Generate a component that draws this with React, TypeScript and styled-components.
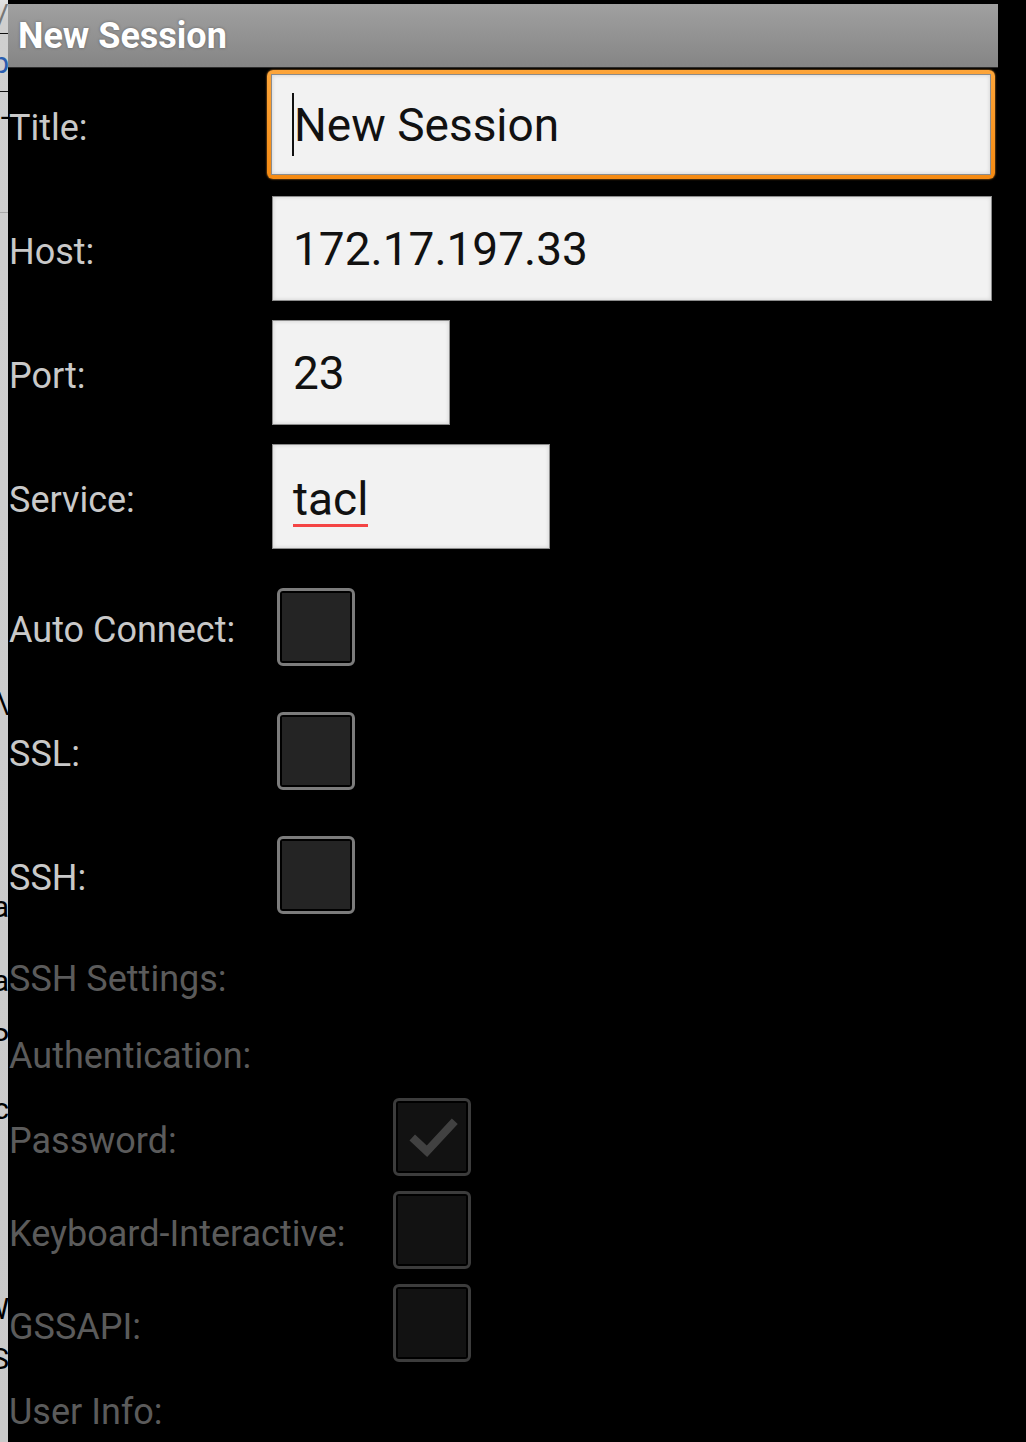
import React from "react";
import styled, { createGlobalStyle } from "styled-components";

const GlobalStyle = createGlobalStyle`
  html, body {
    margin: 0;
    padding: 0;
    background: #000;
  }
  body {
    font-family: Roboto, "Noto Sans", sans-serif;
  }
`;

const App: React.FC = () => {
  return (
    <Root>
      <GlobalStyle />
      <BackPage>
        <Rule $top={33} />
        <Rule $top={91} />
        <Rule $top={212} $light />
        <Peek $top={0} $color="#777">/</Peek>
        <Peek $top={48} $color="#2a5db0">p</Peek>
        <Peek $top={102}>-</Peek>
        <Peek $top={688}>\</Peek>
        <Peek $top={892}>a</Peek>
        <Peek $top={966}>a</Peek>
        <Peek $top={1024}>P</Peek>
        <Peek $top={1094}>c</Peek>
        <Peek $top={1294}>W</Peek>
        <Peek $top={1344}>S</Peek>
      </BackPage>
      <Dialog>
        <TitleBar>New Session</TitleBar>
        <Form>
          <FocusRow>
            <Label>Title:</Label>
            <FocusRing>
              <Field $width={720} $height={101}>
                <Caret />
                New Session
              </Field>
            </FocusRing>
          </FocusRow>
          <TextRow>
            <Label>Host:</Label>
            <Field $width={720}>172.17.197.33</Field>
          </TextRow>
          <TextRow>
            <Label>Port:</Label>
            <Field $width={178}>23</Field>
          </TextRow>
          <TextRow>
            <Label>Service:</Label>
            <Field $width={278}>
              <Misspelled>tacl</Misspelled>
            </Field>
          </TextRow>
          <CheckGroup>
            <Row $height={124}>
              <Label>Auto Connect:</Label>
              <CheckBox />
            </Row>
            <Row $height={124}>
              <Label>SSL:</Label>
              <CheckBox />
            </Row>
            <Row $height={124}>
              <Label>SSH:</Label>
              <CheckBox />
            </Row>
          </CheckGroup>
          <Row $height={77}>
            <Label $dim>SSH Settings:</Label>
          </Row>
          <Row $height={77}>
            <Label $dim>Authentication:</Label>
          </Row>
          <Row $height={93} $wide>
            <Label $dim>Password:</Label>
            <CheckBox $dim>
              <CheckMark viewBox="0 0 77 77">
                <polyline points="19,39 33.5,52.5 61,23" />
              </CheckMark>
            </CheckBox>
          </Row>
          <Row $height={93} $wide>
            <Label $dim>Keyboard-Interactive:</Label>
            <CheckBox $dim />
          </Row>
          <Row $height={93} $wide>
            <Label $dim>GSSAPI:</Label>
            <CheckBox $dim />
          </Row>
          <Row $height={77}>
            <Label $dim>User Info:</Label>
          </Row>
        </Form>
      </Dialog>
    </Root>
  );
};

export default App;

const Root = styled.div`
  width: 1026px;
  height: 1442px;
  display: flex;
  overflow: hidden;
  background: #000;
`;
const BackPage = styled.div`
  position: relative;
  width: 8px;
  flex-shrink: 0;
  overflow: hidden;
  background: linear-gradient(#e2e2e2 0, #cfcfcf 20px, #c9c9c9 100%);
`;
const Rule = styled.div<{ $top: number; $light?: boolean }>`
  position: absolute;
  left: 0;
  right: 0;
  top: ${({ $top }) => $top}px;
  height: 1px;
  background: ${({ $light }) => ($light ? "#a8a8a8" : "#111")};
`;
const Peek = styled.div<{ $top: number; $color?: string }>`
  position: absolute;
  right: -1px;
  top: ${({ $top }) => $top}px;
  font-family: Roboto, sans-serif;
  font-size: 30px;
  line-height: 30px;
  color: ${({ $color }) => $color || "#000"};
`;
const Dialog = styled.div`
  flex: 1;
  display: flex;
  flex-direction: column;
  padding-top: 4px;
  background: #000;
`;
const TitleBar = styled.div`
  flex-shrink: 0;
  width: 980px;
  height: 63px;
  padding-left: 10px;
  display: flex;
  align-items: center;
  background: linear-gradient(#a0a0a0, #858585);
  border-bottom: 1px solid #2c2c2c;
  font-family: Roboto, sans-serif;
  font-weight: 700;
  font-size: 36px;
  color: #fff;
  text-shadow: 0 0 3px rgba(0, 0, 0, 0.35);
`;
const Form = styled.div`
  flex-shrink: 0;
  width: 990px;
  display: flex;
  flex-direction: column;
`;
const Row = styled.div<{ $height: number; $wide?: boolean }>`
  flex-shrink: 0;
  display: grid;
  grid-template-columns: ${({ $wide }) => ($wide ? "385px" : "269px")} 1fr;
  align-items: center;
  height: ${({ $height }) => $height}px;
`;
const TextRow = styled.div`
  flex-shrink: 0;
  display: grid;
  grid-template-columns: 264px 1fr;
  align-items: center;
  padding: 9.5px 0;
`;
const FocusRow = styled(TextRow)`
  grid-template-columns: 259px 1fr;
  padding: 2px 0 7.5px;
`;
const CheckGroup = styled.div`
  flex-shrink: 0;
  display: flex;
  flex-direction: column;
  margin-top: 6px;
`;
const Label = styled.div<{ $dim?: boolean }>`
  padding: 7px 0 0 1px;
  font-family: Roboto, sans-serif;
  font-size: 36px;
  line-height: 36px;
  color: ${({ $dim }) => ($dim ? "#5b5b5b" : "#c9c9c9")};
  white-space: nowrap;
`;
const FocusRing = styled.div`
  width: 720px;
  padding: 4px;
  border-radius: 6px;
  background: linear-gradient(#fda53a, #f58a12);
  box-shadow: 0 0 2px #f59a30;
`;
const Field = styled.div<{ $width: number; $height?: number }>`
  box-sizing: border-box;
  width: ${({ $width }) => $width}px;
  height: ${({ $height }) => $height || 105}px;
  padding-left: 20px;
  display: flex;
  align-items: center;
  background: #f2f2f2;
  border: 1px solid #8c8c8c;
  box-shadow: inset 0 0 4px rgba(0, 0, 0, 0.14);
  font-family: Roboto, sans-serif;
  font-size: 46px;
  color: #111;
  white-space: nowrap;
`;
const Caret = styled.span`
  display: inline-block;
  width: 2px;
  height: 63px;
  background: #111;
`;
const Misspelled = styled.span`
  display: inline-block;
  line-height: 46px;
  border-bottom: 3px solid #f44444;
  padding-bottom: 2px;
  margin-top: 10px;
`;
const CheckBox = styled.div<{ $dim?: boolean }>`
  box-sizing: border-box;
  position: relative;
  width: 78px;
  height: 78px;
  border-radius: 6px;
  border: 3px solid ${({ $dim }) => ($dim ? "#3c3c3c" : "#7c7c7c")};
  padding: 2px;
  background: #000;
  &::before {
    content: "";
    display: block;
    width: 100%;
    height: 100%;
    background: ${({ $dim }) => ($dim ? "#121212" : "#242424")};
  }
`;
const CheckMark = styled.svg`
  position: absolute;
  left: -3px;
  top: -3px;
  width: 78px;
  height: 78px;
  fill: none;
  stroke: #414141;
  stroke-width: 8;
  stroke-linecap: butt;
  stroke-linejoin: miter;
`;
